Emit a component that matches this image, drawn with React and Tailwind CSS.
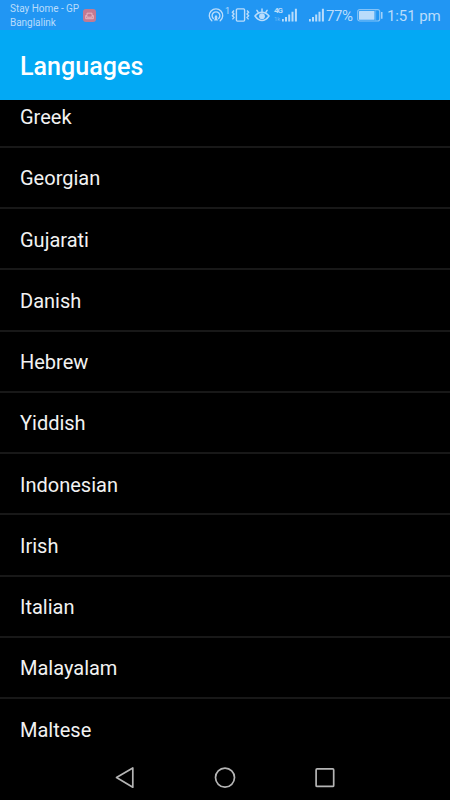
const languages = [
  'Greek',
  'Georgian',
  'Gujarati',
  'Danish',
  'Hebrew',
  'Yiddish',
  'Indonesian',
  'Irish',
  'Italian',
  'Malayalam',
  'Maltese',
];

function HotspotIcon() {
  return (
    <svg width="16" height="16" viewBox="0 0 16 16" fill="none" stroke="currentColor" strokeWidth="1.4" strokeLinecap="round">
      <path d="M3.8 12.8a6.700 6.700 0 1 1 8.400 0" />
      <path d="M5.300 10.600a3.900 3.900 0 1 1 5.400 0" />
      <path d="M8 6.800 9.800 9.500H8.800L10 12.500H6L7.200 9.500H6.200Z" fill="currentColor" stroke="none" />
    </svg>
  );
}

function VibrateIcon() {
  return (
    <svg width="19" height="14" viewBox="0 0 19 14" fill="none" stroke="currentColor" strokeWidth="1.4">
      <rect x="5.4" y="0.9" width="8.2" height="12.2" rx="1" />
      <path d="M3 2.5 1.4 4.2 3 6 1.4 7.8 3 9.6 1.4 11.4M16 2.5l1.6 1.7L16 6l1.6 1.8L16 9.6l1.6 1.8" />
    </svg>
  );
}

function EyeIcon() {
  return (
    <svg width="16" height="14" viewBox="0 0 16 14" fill="none" stroke="currentColor" strokeWidth="1.5" strokeLinecap="round">
      <path d="M1 8c2-2.6 4.3-3.8 7-3.8S13 5.4 15 8c-2 2.9-4.3 4.500-7 4.500S3 10.900 1 8Z" />
      <circle cx="8" cy="8.2" r="2.900" fill="currentColor" stroke="none" />
      <path d="M8 3.500V1M4.200 4.300 2.900 2.300M11.800 4.300l1.300-2" />
    </svg>
  );
}

function SignalIcon() {
  return (
    <svg width="15" height="14" viewBox="0 0 15 14" fill="currentColor">
      <path d="M0 11h1.800v2.500H0zM3 9h2v4.500H3zM6.200 6.500h2v7h-2zM9.500 3.700h2v9.800h-2zM12.900 .8h2v12.700h-2z" />
    </svg>
  );
}

function BatteryIcon() {
  return (
    <svg width="26" height="14" viewBox="0 0 26 14" fill="none" stroke="currentColor">
      <rect x="0.7" y="1.7" width="22" height="11.3" rx="2" strokeOpacity="0.65" strokeWidth="1.2" />
      <rect x="2" y="3" width="15.5" height="8.8" rx="0.5" fill="currentColor" stroke="none" />
      <path d="M18.700 2.500v9.800" strokeOpacity="0.4" />
      <path d="M24.800 4.100v6.600" strokeWidth="1.3" />
    </svg>
  );
}

function SofaIcon() {
  return (
    <svg width="9" height="8" viewBox="0 0 9 8" fill="none" stroke="#e6b6c3" strokeWidth="1">
      <path d="M2 3.200V1.200h5v2M.7 3.500h1.200v1.700h5.200V3.500h1.200v3.200H.7Z" />
    </svg>
  );
}

function StatusBar() {
  return (
    <div className="flex h-[30px] shrink-0 items-start bg-[#2196f3] text-[#b9dcfb]">
      <div className="w-[73px] shrink-0 pt-[2px] pl-[10px] text-[10px] leading-[14px] tracking-[-0.03px] whitespace-nowrap">
        <p>Stay Home - GP</p>
        <p>Banglalink</p>
      </div>
      <div className="mt-[9px] ml-[10px] flex size-[13px] shrink-0 items-center justify-center rounded-[3px] bg-[#c47991]">
        <SofaIcon />
      </div>
      <div className="mt-[8px] ml-[112px] flex shrink-0">
        <HotspotIcon />
        <span className="w-[7px] pl-px text-[9px] leading-[7px]">1</span>
      </div>
      <div className="mt-[8px] flex shrink-0 items-start">
        <VibrateIcon />
        <span className="ml-[4px]"><EyeIcon /></span>
        <div className="mt-[-1px] ml-[4px] w-[8px] text-[8px] leading-[8px] font-bold tracking-[-1px]">
          <p>4G</p>
          <p className="text-[6px] leading-[7px] font-normal tracking-normal opacity-50">1k</p>
        </div>
        <SignalIcon />
        <span className="ml-[12px]"><SignalIcon /></span>
      </div>
      <span className="mt-[6px] ml-[2px] w-[31px] text-[15px] leading-[20px] tracking-[-0.4px]">77%</span>
      <span className="mt-[8px]"><BatteryIcon /></span>
      <span className="mt-[6px] ml-[4px] text-[15px] leading-[20px] tracking-[-0.1px] whitespace-nowrap">1:51 pm</span>
    </div>
  );
}

function NavigationBar() {
  return (
    <nav className="flex h-[45px] shrink-0 items-center justify-center gap-[76px] bg-black text-[#b5b5b5]">
      <svg width="24" height="24" viewBox="0 0 24 24" fill="none" stroke="currentColor" strokeWidth="1.7" strokeLinejoin="round">
        <path d="M19.800 2v19.200L3.500 11.600Z" />
      </svg>
      <svg width="24" height="24" viewBox="0 0 24 24" fill="none" stroke="currentColor" strokeWidth="1.7">
        <circle cx="12" cy="11.600" r="9.500" />
      </svg>
      <svg width="24" height="24" viewBox="0 0 24 24" fill="none" stroke="currentColor" strokeWidth="1.7">
        <rect x="3.100" y="2.900" width="17.600" height="17.500" rx="1" />
      </svg>
    </nav>
  );
}

export default function App() {
  return (
    <div className="flex h-[800px] w-[450px] flex-col overflow-hidden bg-black font-['Roboto',sans-serif]">
      <StatusBar />
      <header className="flex h-[70px] shrink-0 items-center bg-[#03a9f4] px-5 pt-[3px]">
        <h1 className="text-[25px] font-medium tracking-[0.05px] text-white">Languages</h1>
      </header>
      <main className="flex min-h-0 flex-1 flex-col overflow-hidden">
        <ul className="-mt-[13.4px]">
          {languages.map((language) => (
            <li
              key={language}
              className="flex h-[61.25px] items-center border-b-2 border-[#181818] px-5 pt-[2px] text-[20px] text-[#f2f2f2]"
            >
              {language}
            </li>
          ))}
        </ul>
      </main>
      <NavigationBar />
    </div>
  );
}
